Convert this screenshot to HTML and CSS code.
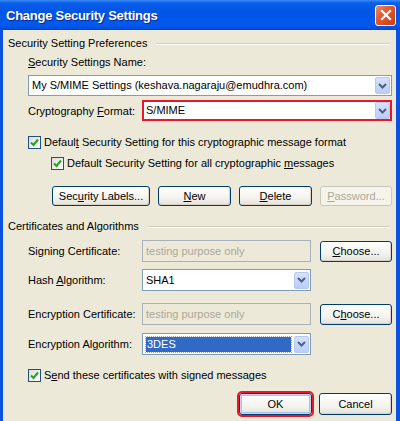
FILE: index.html
```html
<!DOCTYPE html>
<html lang="en">
<head>
  <meta charset="UTF-8">
  <title>Change Security Settings</title>
  <link rel="stylesheet" href="styles.css">
</head>
<body>
  <div class="window">
    <div class="titlebar">
      <span class="title">Change Security Settings</span>
      <span class="close">
        <svg width="12" height="12" viewBox="0 0 12 12"><path d="M2 2L10 10M10 2L2 10" stroke="#fff" stroke-width="2.2" stroke-linecap="square"/></svg>
      </span>
    </div>
    <div class="client">
      <div class="group-title"><span>Security Setting Preferences</span></div>
      <div class="indent">
        <div class="label-row"><u>S</u>ecurity Settings Name:</div>
        <div class="combo combo-wide">
          <span class="combo-text">My S/MIME Settings (keshava.nagaraju@emudhra.com)</span>
          <span class="drop"><svg width="9" height="6" viewBox="0 0 9 6"><path d="M1 1L4.5 4.5L8 1" fill="none" stroke="#4d6185" stroke-width="2"/></svg></span>
        </div>
        <div class="row row-crypto">
          <span class="label">Cryptography <u>F</u>ormat:</span>
          <div class="combo combo-flex marked">
            <span class="combo-text">S/MIME</span>
            <span class="drop"><svg width="9" height="6" viewBox="0 0 9 6"><path d="M1 1L4.5 4.5L8 1" fill="none" stroke="#4d6185" stroke-width="2"/></svg></span>
          </div>
        </div>
        <div class="check check-1"><span class="box"><svg width="9" height="9" viewBox="0 0 9 9"><path d="M1 4.5L3.5 7L8 1.5" fill="none" stroke="#21a121" stroke-width="2"/></svg></span><span class="check-text">Defaul<u>t</u> Security Setting for this cryptographic message format</span></div>
        <div class="check check-2"><span class="box"><svg width="9" height="9" viewBox="0 0 9 9"><path d="M1 4.5L3.5 7L8 1.5" fill="none" stroke="#21a121" stroke-width="2"/></svg></span><span class="check-text">Default Security Setting for all cryptographic <u>m</u>essages</span></div>
        <div class="buttons">
          <span class="btn btn-labels">Sec<u>u</u>rity Labels...</span>
          <span class="btn"><u>N</u>ew</span>
          <span class="btn"><u>D</u>elete</span>
          <span class="btn disabled"><u>P</u>assword...</span>
        </div>
      </div>
      <div class="group-title group-2"><span>Certificates and Algorithms</span></div>
      <div class="indent">
        <div class="row row-field">
          <span class="label">Signing Certificate:</span>
          <span class="field">testing purpose only</span>
          <span class="btn btn-choose"><u>C</u>hoose...</span>
        </div>
        <div class="row row-field">
          <span class="label">Hash <u>A</u>lgorithm:</span>
          <div class="combo combo-mid">
            <span class="combo-text">SHA1</span>
            <span class="drop"><svg width="9" height="6" viewBox="0 0 9 6"><path d="M1 1L4.5 4.5L8 1" fill="none" stroke="#4d6185" stroke-width="2"/></svg></span>
          </div>
        </div>
        <div class="row row-field row-enc">
          <span class="label">Encryption Certificate:</span>
          <span class="field">testing purpose only</span>
          <span class="btn btn-choose">C<u>h</u>oose...</span>
        </div>
        <div class="row row-field row-alg">
          <span class="label">Encryption Al<u>g</u>orithm:</span>
          <div class="combo combo-mid">
            <span class="combo-text selected">3DES</span>
            <span class="drop"><svg width="9" height="6" viewBox="0 0 9 6"><path d="M1 1L4.5 4.5L8 1" fill="none" stroke="#4d6185" stroke-width="2"/></svg></span>
          </div>
        </div>
        <div class="check check-3"><span class="box"><svg width="9" height="9" viewBox="0 0 9 9"><path d="M1 4.5L3.5 7L8 1.5" fill="none" stroke="#21a121" stroke-width="2"/></svg></span><span class="check-text">S<u>e</u>nd these certificates with signed messages</span></div>
      </div>
      <div class="footer">
        <span class="btn btn-ok">OK</span>
        <span class="btn btn-cancel">Cancel</span>
      </div>
    </div>
  </div>
</body>
</html>
```

FILE: styles.css
```css
html,body{margin:0;padding:0;}
body{
  width: 400px;
  height: 421px;
  overflow: hidden;
  font-family: "Liberation Sans", Arial, sans-serif;
  font-size: 11px;
  color: #000;
  background: #ece9d8;
}
u{
  text-decoration: underline;
  text-underline-offset: 1px;
}
.window{
  width: 400px;
  height: 421px;
  box-sizing: border-box;
  border-left: 3px solid #0a53e0;
  border-right: 4px solid #0a53e0;
  display: flex;
  flex-direction: column;
}
.titlebar{
  height: 30px;
  margin: 0 -4px 0 -3px;
  display: flex;
  align-items: center;
  justify-content: space-between;
  padding: 0 4px 0 6px;
  background: linear-gradient(#3b8cf7 0, #0a5ee8 3px, #0055e5 40%, #0059ee 85%, #0146d8 100%);
}
.title{
  color: #fff;
  font-family: "Liberation Sans", Arial, sans-serif;
  font-weight: bold;
  font-size: 13px;
  letter-spacing: -0.25px;
  text-shadow: 1px 1px 0 #0a2a8a;
}
.close{
  width: 19px;
  height: 19px;
  border: 1px solid #fff;
  border-radius: 3px;
  display: flex;
  align-items: center;
  justify-content: center;
  background: linear-gradient(135deg, #f08a68 0, #e25a2e 40%, #cc3c12 100%);
}
.client{
  flex: 1;
  padding: 7px 4px 0 5px;
  display: flex;
  flex-direction: column;
}
.group-title{
  height: 13px;
  line-height: 13px;
  display: flex;
  align-items: center;
  padding-right: 2px;
}
.group-title::after{
  content: '';
  flex: 1;
  margin-left: 9px;
  border-top: 1px solid #d0d0bf;
  border-bottom: 1px solid #fff;
}
.group-2{
  margin-top: 14px;
}
.indent{
  padding-left: 20px;
  display: flex;
  flex-direction: column;
}
.label-row{
  height: 13px;
  line-height: 13px;
  margin-top: 6px;
}
.row{
  display: flex;
  align-items: center;
}
.label{
  width: 114px;
  flex: none;
}
.combo{
  height: 21px;
  box-sizing: border-box;
  border: 1px solid #7f9db9;
  background: #fff;
  display: flex;
  align-items: center;
  padding: 0 1px 0 3px;
}
.combo-wide{
  margin-top: 6px;
}
.combo-flex{
  flex: 1;
}
.combo-mid{
  width: 169px;
  height: 22px;
}
.marked{
  border: 2px solid #e8172c;
  padding: 0 0 0 2px;
}
.combo-text{
  flex: 1;
  height: 15px;
  line-height: 15px;
  margin-right: 3px;
  white-space: nowrap;
  overflow: hidden;
}
.combo-text.selected{
  background: #316ac5;
  color: #fff;
  outline: 1px dotted #c9a36b;
  padding-left: 1px;
}
.drop{
  width: 15px;
  height: 17px;
  flex: none;
  box-sizing: border-box;
  border: 1px solid #b6c8f2;
  border-radius: 2px;
  background: linear-gradient(#d6e2fd, #b9cdf8);
  display: flex;
  align-items: center;
  justify-content: center;
}
.row-crypto{
  margin-top: 4px;
}
.check{
  display: flex;
  align-items: center;
  height: 13px;
  line-height: 13px;
}
.check-text{
  white-space: nowrap;
}
.box{
  width: 13px;
  height: 13px;
  flex: none;
  box-sizing: border-box;
  border: 1px solid #1c5180;
  background: linear-gradient(135deg, #dcdcd7, #fff);
  margin-right: 3px;
  display: flex;
  align-items: center;
  justify-content: center;
}
.check-1{
  margin-top: 15px;
}
.check-2{
  margin-top: 8px;
  padding-left: 23px;
}
.buttons{
  margin-top: 16px;
  padding-left: 24px;
  display: flex;
  gap: 8px;
}
.btn{
  width: 73px;
  height: 20px;
  box-sizing: border-box;
  border: 1px solid #003c74;
  border-radius: 3px;
  background: linear-gradient(#fff 0, #f4f3ee 60%, #e3e2da 100%);
  box-shadow: inset -1px -1px 0 #d6d0c5;
  display: flex;
  align-items: center;
  justify-content: center;
  flex: none;
}
.btn-labels{
  width: 98px;
}
.btn.disabled{
  border-color: #c9c7ba;
  background: #f5f4ea;
  box-shadow: none;
  color: #aca899;
  width: 72px;
}
.row-field{
  margin-top: 7px;
}
.field{
  width: 169px;
  height: 22px;
  box-sizing: border-box;
  border: 1px solid #a7b0bb;
  background: #ece9d8;
  color: #aca899;
  padding: 1px 3px 0;
  line-height: 18px;
  flex: none;
}
.btn-choose{
  margin-left: 9px;
  width: 72px;
  height: 21px;
}
.row-enc{
  margin-top: 12px;
}
.row-alg{
  margin-top: 8px;
}
.check-3{
  margin-top: 14px;
}
.footer{
  margin-top: 11px;
  display: flex;
  justify-content: flex-end;
  gap: 7px;
}
.btn-ok,.btn-cancel{
  width: 73px;
  height: 22px;
}
.btn-ok{
  outline: 2px solid #e8172c;
  border-color: #003c74;
  box-shadow: inset 0 0 0 1px #c2d4f7, inset 0 0 0 2px #a8c0ec;
}
```
